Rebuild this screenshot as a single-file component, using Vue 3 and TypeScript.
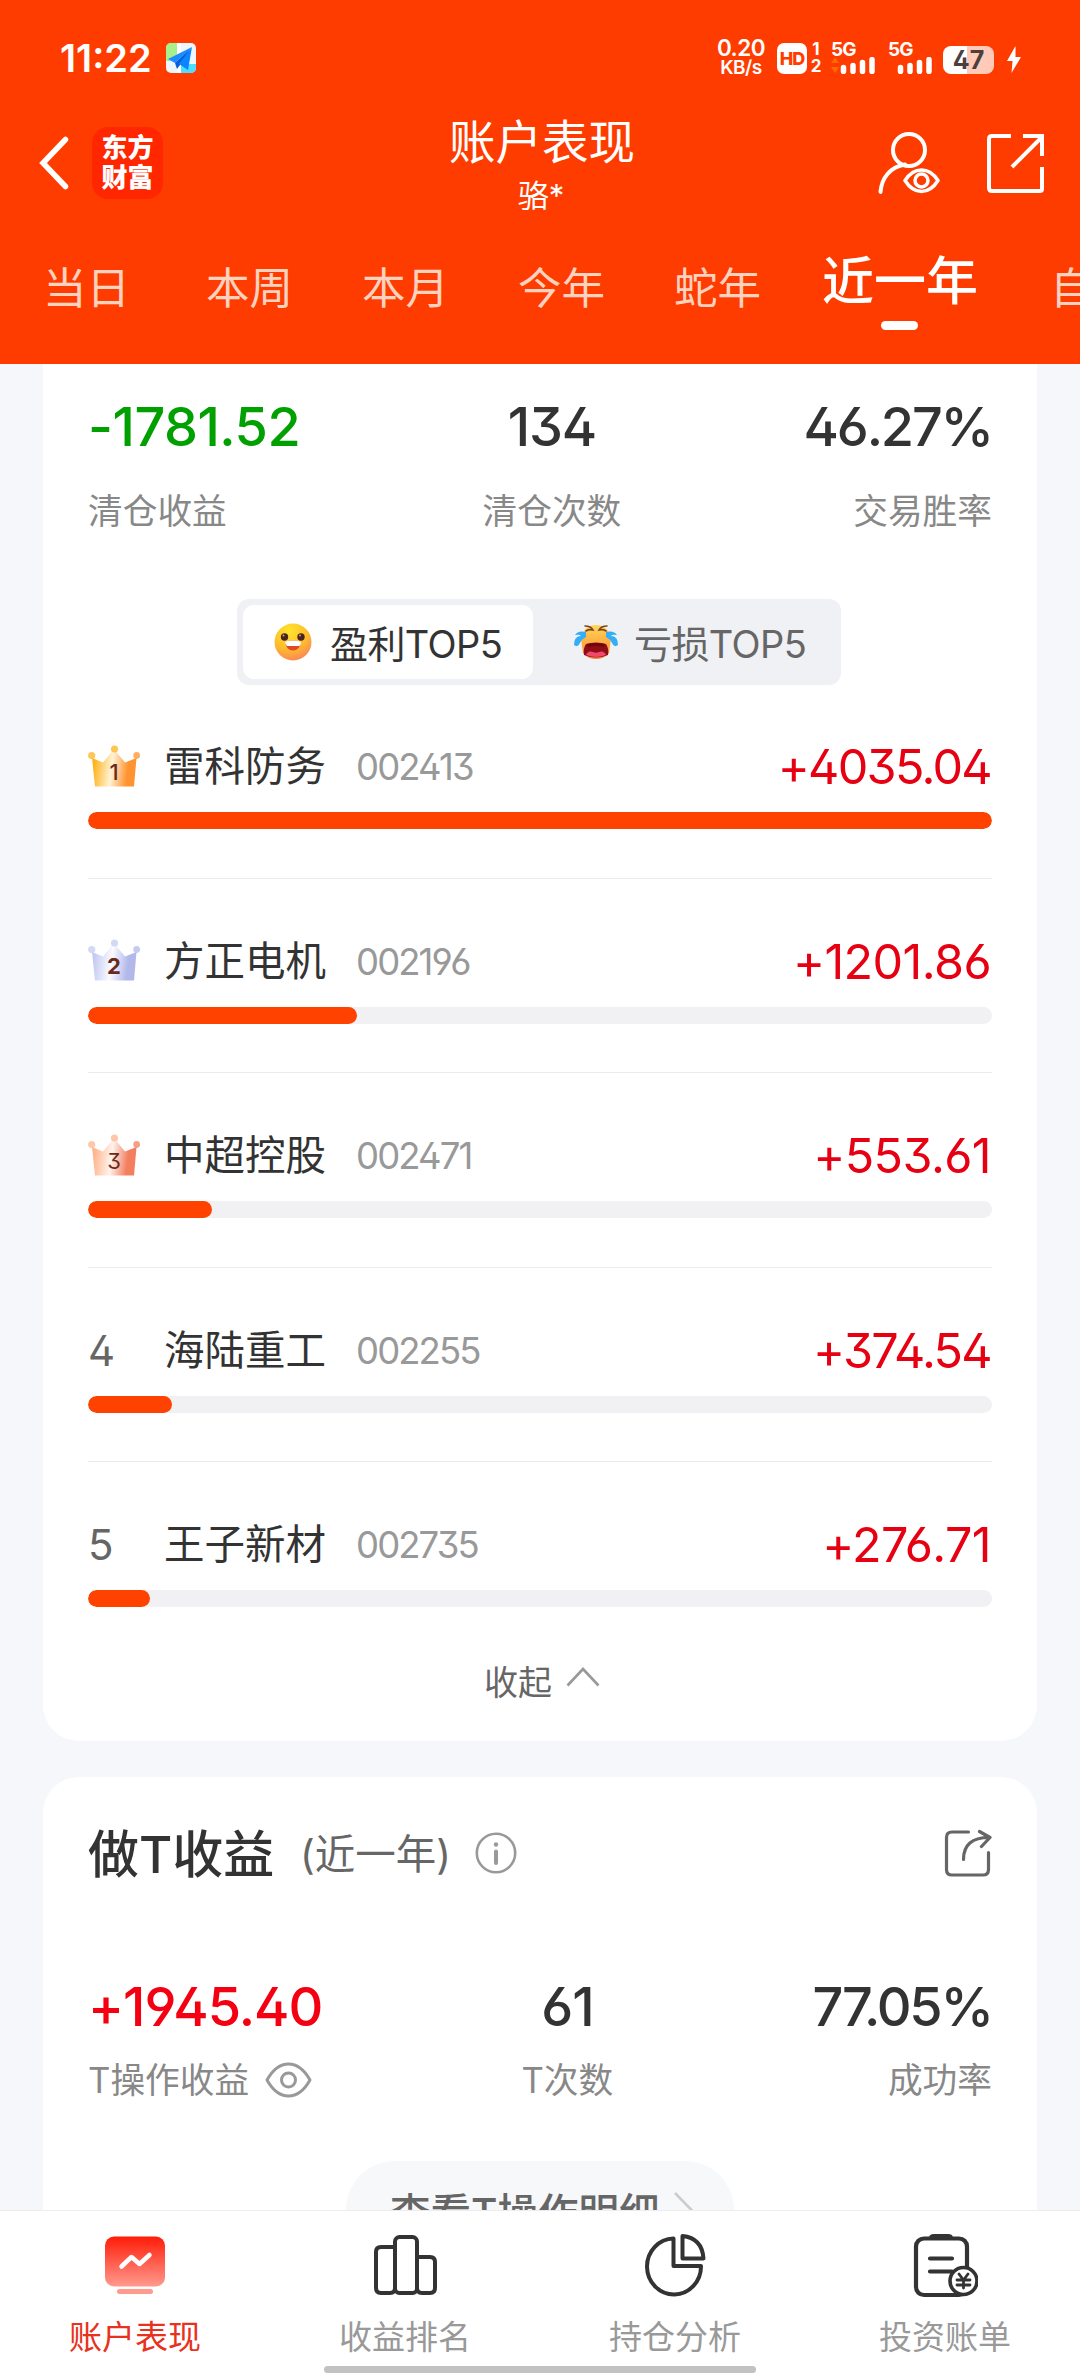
<script setup lang="ts">
interface Stock {
  rank: number
  name: string
  code: string
  profit: number
}

interface Crown {
  edge: string
  mid: string
  right: string
  weight: number
}

const periods: string[] = ['当日', '本周', '本月', '今年', '蛇年', '近一年', '自定义']
const activePeriod = '近一年'

const stocks: Stock[] = [
  { rank: 1, name: '雷科防务', code: '002413', profit: 4035.04 },
  { rank: 2, name: '方正电机', code: '002196', profit: 1201.86 },
  { rank: 3, name: '中超控股', code: '002471', profit: 553.61 },
  { rank: 4, name: '海陆重工', code: '002255', profit: 374.54 },
  { rank: 5, name: '王子新材', code: '002735', profit: 276.71 },
]

const crowns: Crown[] = [
  { edge: '#ffb21c', mid: '#fff3d6', right: '#ff9330', weight: 500 },
  { edge: '#c3cbf2', mid: '#fbfbff', right: '#b3b8ea', weight: 700 },
  { edge: '#ffb48c', mid: '#fff3ec', right: '#f37f5f', weight: 400 },
]

const best = Math.max(...stocks.map((s) => s.profit))
const share = (s: Stock): string => `${(s.profit / best) * 100}%`
// Amounts containing the narrow digit 1 need less tightening than the others.
const hasOne = (s: Stock): boolean => s.profit.toFixed(2).includes('1')
</script>

<template>
  <div class="page">
    <header class="top">
      <div class="status">
        <span class="clock">11:22</span>
        <svg class="plane" width="30" height="30" viewBox="0 0 30 30">
          <clipPath id="pl"><rect width="30" height="30" rx="5" /></clipPath>
          <g clip-path="url(#pl)">
            <rect width="30" height="30" fill="#eef6fb" />
            <rect width="11" height="18" fill="#a8f08c" />
            <rect x="15" y="21" width="15" height="9" fill="#4fdcff" />
            <rect x="11" width="4" height="30" fill="#fff" />
            <path d="M26 4 2 16l7 4z" fill="#1a8cff" />
            <path d="M26 4 9 20l2 6 3-4z" fill="#0560d8" />
            <path d="M26 4 13 21l9 6z" fill="#0a86ff" />
          </g>
        </svg>
        <div class="net"><span>0.20</span><span class="unit">KB/s</span></div>
        <div class="hd">HD</div>
        <div class="sims"><span>1</span><span>2</span></div>
        <div class="signal">
          <span>5G</span>
          <svg width="44" height="17" viewBox="0 0 44 17">
            <path d="M0 6 4 0.500 8 6zM0 10h8l-4 6z" fill="#ff6a00" />
            <path d="M12.500 10.500v4M22 8.500v6M31.500 5.500v9M41 2.500v12" stroke="#fff" stroke-width="5.500" stroke-linecap="round" />
          </svg>
        </div>
        <div class="signal second">
          <span>5G</span>
          <svg width="44" height="17" viewBox="0 0 44 17">
            <path d="M12.500 10.500v4M22 8.500v6M31.500 5.500v9M41 2.500v12" stroke="#fff" stroke-width="5.500" stroke-linecap="round" />
          </svg>
        </div>
        <div class="battery">47</div>
        <svg class="bolt" width="14" height="27" viewBox="0 0 14 27"><path d="M8.500 0 0 15h5.500L4.500 27 14 11H8.500z" fill="#fff" /></svg>
      </div>

      <div class="bar">
        <svg width="30" height="54" viewBox="0 0 30 54"><path d="M26.500 3.500 4 27l22.500 23.500" fill="none" stroke="#fff" stroke-width="5.500" stroke-linecap="round" /></svg>
        <div class="brand"><span>东方</span><span>财富</span></div>
        <div class="heading">
          <h1>账户表现</h1>
          <p>骆*</p>
        </div>
        <svg class="viewer" width="62" height="62" viewBox="0 0 62 62" fill="none" stroke="#fff" stroke-width="4" stroke-linecap="round">
          <circle cx="31" cy="18" r="16" />
          <path d="M2.500 60C3.500 46 12 35 27 32.500" />
          <path d="M27 48.500C36 34.500 51 34.500 60 48.500 51 63 36 63 27 48.500z" stroke-width="3.500" stroke-linejoin="round" />
          <circle cx="43.500" cy="48.500" r="6.500" stroke-width="3.500" />
        </svg>
        <svg width="58" height="60" viewBox="0 0 58 60" fill="none" stroke="#fff" stroke-width="4">
          <path d="M24 3H5Q2 3 2 6v49q0 3 3 3h48q2 0 2-2V34" />
          <path d="M36 3h19v20M55 4 25 34" />
        </svg>
      </div>

      <nav class="tabs">
        <span v-for="p in periods" :key="p" class="tab" :class="{ on: p === activePeriod }">{{ p }}</span>
      </nav>
    </header>

    <main class="content">
      <section class="card first">
        <div class="stats">
          <div class="stat"><b class="green">-1781.52</b><span>清仓收益</span></div>
          <div class="stat mid"><b>134</b><span>清仓次数</span></div>
          <div class="stat end"><b>46.27%</b><span>交易胜率</span></div>
        </div>

        <div class="switch">
          <div class="side on">
            <svg width="38" height="38" viewBox="0 0 38 38">
              <defs>
                <radialGradient id="face" cx=".4" cy=".2" r=".85">
                  <stop offset="0" stop-color="#ffe32e" /><stop offset=".55" stop-color="#ffc02a" /><stop offset="1" stop-color="#f9825a" />
                </radialGradient>
              </defs>
              <circle cx="19" cy="19" r="18.500" fill="url(#face)" />
              <circle cx="10.500" cy="14" r="3.700" fill="#4a2419" /><circle cx="27" cy="14" r="3.700" fill="#4a2419" />
              <circle cx="9.500" cy="12.500" r="1" fill="#c99" /><circle cx="26" cy="12.500" r="1" fill="#c99" />
              <path d="M11 18.500q8-2 16 0-1 9-8 9t-8-9z" fill="#e04a28" />
              <path d="M11 18.500q8-2 16 0 0 4-2 4.500H13q-2-1-2-4.500z" fill="#fff" />
            </svg>
            <span>盈利TOP5</span>
          </div>
          <div class="side">
            <svg width="44" height="36" viewBox="0 0 44 36">
              <defs>
                <linearGradient id="sob" x2="0" y2="1">
                  <stop offset="0" stop-color="#ffd75c" /><stop offset=".6" stop-color="#ffa63d" /><stop offset="1" stop-color="#ff8338" />
                </linearGradient>
              </defs>
              <path d="M22 1C31 1 36 7 37 15l-2 14q-5 6-13 6T9 29L7 15C8 7 13 1 22 1z" fill="url(#sob)" />
              <path d="M11 2q6 0 8 4-4-1-7 1M33 2q-6 0-8 4 4-1 7 1" fill="none" stroke="#7a4526" stroke-width="1.600" stroke-linecap="round" />
              <path d="M12 20q10-3 20 0 3 4 2 11-12 5-24 0-1-7 2-11z" fill="#8f0d14" />
              <path d="M13 20q9-2 18 0l-1 3q-8-2-16 0z" fill="#6d0610" />
              <path d="M12 31q2-5 7-3 3 1.500 6 0 5-2 7 3-10 4-20 0z" fill="#f0496b" />
              <path d="M12 8Q4 6 1 11q5-1 6 1-7 0-7 9 4 3 6-2 2-4 6-6z" fill="#35aef5" />
              <path d="M32 8q8-2 11 3-5-1-6 1 7 0 7 9-4 3-6-2-2-4-6-6z" fill="#35aef5" />
            </svg>
            <span>亏损TOP5</span>
          </div>
        </div>

        <div v-for="s in stocks" :key="s.code" class="row">
          <div class="line">
            <div class="rank">
              <svg v-if="s.rank <= 3" width="52" height="42" viewBox="0 0 52 42">
                <defs>
                  <linearGradient :id="'cr' + s.rank" x1="0" x2="1" y1="0" y2=".1">
                    <stop offset="0.080" :stop-color="crowns[s.rank - 1].edge" />
                    <stop offset="0.480" :stop-color="crowns[s.rank - 1].mid" />
                    <stop offset="0.850" :stop-color="crowns[s.rank - 1].right" />
                  </linearGradient>
                </defs>
                <path d="M4 13 15 17.500 24.500 6h3L37 17.500 48.500 13 46 41.500H7z" :fill="`url(#cr${s.rank})`" />
                <g :fill="crowns[s.rank - 1].edge" fill-opacity=".75">
                  <circle cx="3.700" cy="10.500" r="3.600" /><circle cx="26.500" cy="4" r="3.600" />
                </g>
                <circle cx="48.700" cy="10.500" r="3.400" :fill="crowns[s.rank - 1].right" fill-opacity=".75" />
                <text x="26" y="35" text-anchor="middle" font-size="22" fill="#6b2a1c" :font-weight="crowns[s.rank - 1].weight">{{ s.rank }}</text>
              </svg>
              <span v-else>{{ s.rank }}</span>
            </div>
            <span class="name">{{ s.name }}</span>
            <span class="code">{{ s.code }}</span>
            <span class="profit" :class="{ loose: hasOne(s) }">+{{ s.profit.toFixed(2) }}</span>
          </div>
          <div class="track"><div class="fill" :style="{ width: share(s) }"></div></div>
        </div>

        <div class="fold">
          <span>收起</span>
          <svg width="34" height="20" viewBox="0 0 34 20"><path d="M1.500 18.500 17 2l15.500 16.500" fill="none" stroke="#999" stroke-width="2.600" /></svg>
        </div>
      </section>

      <section class="card second">
        <div class="title">
          <h2>做T收益</h2>
          <span class="span">(近一年)</span>
          <svg width="42" height="42" viewBox="0 0 42 42">
            <circle cx="21" cy="21" r="19.200" fill="none" stroke="#999" stroke-width="2.600" />
            <circle cx="21" cy="12.500" r="2.200" fill="#999" />
            <path d="M21 19.500V31" stroke="#999" stroke-width="4" stroke-linecap="round" />
          </svg>
          <svg class="out" width="48" height="48" viewBox="0 0 48 48" fill="none" stroke="#666" stroke-width="3.200" stroke-linecap="round" stroke-linejoin="round">
            <path d="M24.500 3H8Q2.500 3 2.500 8.500v32Q2.500 46 8 46h31q5.500 0 5.500-5.500V23.500" />
            <path d="M19.500 30.500C19.500 16 28 8.500 45 8.500M35.500 2.500 46 8.500 37.500 17.500" />
          </svg>
        </div>
        <div class="stats">
          <div class="stat">
            <b class="red">+1945.40</b>
            <span class="with-eye">T操作收益
              <svg width="47" height="36" viewBox="0 0 47 36" fill="none" stroke="#999" stroke-width="3" stroke-linejoin="round">
                <path d="M2 18Q11 2 23.500 2T45 18Q36 34 23.500 34T2 18z" /><circle cx="23.500" cy="18" r="7" />
              </svg>
            </span>
          </div>
          <div class="stat mid"><b>61</b><span>T次数</span></div>
          <div class="stat end"><b>77.05%</b><span>成功率</span></div>
        </div>
        <div class="detail">
          <span>查看T操作明细</span>
          <svg width="21" height="40" viewBox="0 0 21 40"><path d="M2 3 18.500 20 2 37" fill="none" stroke="#ccc" stroke-width="2.600" /></svg>
        </div>
      </section>
    </main>

    <footer class="dock">
      <div class="item on">
        <svg width="66" height="66" viewBox="0 0 66 66">
          <defs><linearGradient id="scr" x2="0" y2="1"><stop offset="0" stop-color="#ff1c08" /><stop offset="1" stop-color="#ff9a8e" /></linearGradient></defs>
          <rect x="3" y="3.500" width="60" height="50" rx="9" fill="url(#scr)" />
          <path d="M19.500 33.500 29.500 24 37.500 31 47.500 22" fill="none" stroke="#fff" stroke-width="4.500" stroke-linecap="round" stroke-linejoin="round" />
          <rect x="15" y="56" width="36" height="5" rx="2.500" fill="#ff9a8e" />
        </svg>
        <span>账户表现</span>
      </div>
      <div class="item">
        <svg width="66" height="66" viewBox="0 0 66 66" fill="none" stroke="#333" stroke-width="4">
          <path d="M22 14H9Q4 14 4 19v36q0 5 5 5h9q5 0 5-5" />
          <rect x="23" y="4" width="22" height="56" rx="4.500" />
          <path d="M45 55q0 5 5 5h8q5 0 5-5V29q0-5-5-5H46" />
        </svg>
        <span>收益排名</span>
      </div>
      <div class="item">
        <svg width="66" height="66" viewBox="0 0 66 66" fill="none" stroke="#333" stroke-width="4" stroke-linejoin="round">
          <path d="M31.500 5.500A27 28 0 1 0 59 33H31.500z" />
          <path d="M40.500 3Q60 5 61.500 25.500H40.500z" />
        </svg>
        <span>持仓分析</span>
      </div>
      <div class="item">
        <svg width="66" height="66" viewBox="0 0 66 66" fill="none" stroke="#333" stroke-width="4.200" stroke-linecap="round">
          <rect x="4" y="5.500" width="51" height="56.500" rx="8" />
          <path d="M17 5Q17 1 22 1h14q5 0 5 4z" fill="#333" stroke="none" />
          <path d="M18 25.500h22M18 38.500h22" />
          <circle cx="51.500" cy="48" r="13.500" fill="#fff" stroke-width="3.600" />
          <path d="m47 41 4.500 6 4.500-6M51.500 47v8M45 47h13M45 52h13" stroke-width="2.800" />
        </svg>
        <span>投资账单</span>
      </div>
      <i class="home"></i>
    </footer>
  </div>
</template>

<style>
body {
  background: #f6f7fa;
}
</style>

<style scoped>
.page {
  width: 1080px;
  height: 2376px;
  overflow: hidden;
  display: flex;
  flex-direction: column;
  background: #f6f7fa;
  color: #333;
  font-family: Inter, "Noto Sans CJK SC", sans-serif;
  font-feature-settings: "ss01" 1;
}
svg { flex: none; display: block; }
h1, h2, p { margin: 0; font-weight: 400; }
span, b { white-space: nowrap; }

.top { height: 364px; flex: none; background: #ff3c00; color: #fff; overflow: hidden; }
.status { height: 76px; padding-top: 20px; display: flex; align-items: center; }
.clock { margin-left: 60px; width: 106px; font-size: 38px; font-weight: 600; line-height: 76px; letter-spacing: 0; }
.net { margin-left: 521px; width: 48px; display: flex; flex-direction: column; align-items: center; font-weight: 600; font-size: 22.500px; line-height: 20px; letter-spacing: -.5px; }
.net .unit { font-size: 19px; }
.hd { margin-left: 12px; width: 30px; height: 31px; border-radius: 7px; background: #fff; color: #ff3c00; font-size: 18px; font-weight: 800; line-height: 31px; text-align: center; letter-spacing: -1px; }
.sims { margin-left: 3px; width: 12px; display: flex; flex-direction: column; font-size: 17px; font-weight: 700; line-height: 17px; align-items: center; }
.signal { margin-left: 9px; width: 44px; height: 32px; font-size: 19px; font-weight: 700; line-height: 15px; letter-spacing: -1px; display: flex; flex-direction: column; }
.signal.second { margin-left: 13px; }
.battery { margin-left: 11px; width: 51px; height: 28px; margin-top: 3px; border-radius: 8px; background: linear-gradient(90deg, #fff 47%, #ffcab8 47%); color: #4b403e; font-size: 25px; font-weight: 700; line-height: 29px; text-align: center; }
.bolt { margin-left: 13px; margin-top: 3px; }

.bar { height: 132px; display: flex; align-items: center; padding-left: 39px; box-sizing: border-box; }
.bar > svg, .brand { margin-top: 1px; }
.brand { margin-left: 23px; width: 71px; height: 72px; padding-bottom: 3px; box-sizing: border-box; border-radius: 16px; background: #ff2600; display: flex; flex-direction: column; align-items: center; justify-content: center; font-family: "Noto Sans CJK SC", sans-serif; font-weight: 900; font-size: 26px; line-height: 30px; }
.heading { margin: 0 0 0 286px; width: 184px; text-align: center; }
.heading h1 { font-size: 46.500px; line-height: 60px; margin-top: 5px; white-space: nowrap; }
.heading p { font-size: 31px; line-height: 42px; margin-top: 3px; }
.viewer { margin-left: 245px; }
.viewer + svg { margin-left: 47px; }

.tabs { display: flex; align-items: center; margin-left: 43px; height: 120px; }
.tab { flex: none; font-size: 43.500px; line-height: 60px; color: #ffd2bf; margin-right: 69px; }
.tab:first-child { margin-right: 76px; }
.tab.on { position: relative; font-size: 52px; font-weight: 500; color: #fff; margin: -13px 72px 0 -8px; }
.tab.on::after { content: ""; position: absolute; left: 59px; top: 69px; width: 37px; height: 9px; border-radius: 5px; background: #fff; }

.content { flex: 1; min-height: 0; overflow: hidden; padding: 0 43px; }
.card { background: #fff; padding: 0 45px; overflow: hidden; border-radius: 36px; }
.card.first { border-radius: 0 0 36px 36px; padding-top: 33px; padding-bottom: 36px; }
.card.second { margin-top: 36px; padding-top: 48px; height: 600px; }
.stats { display: flex; justify-content: space-between; }
.second .stats { margin-top: 92px; }
.stat { display: flex; flex-direction: column; align-items: flex-start; }
.stat.mid { align-items: center; }
.stat.end { align-items: flex-end; }
.stat b { font-size: 54px; font-weight: 500; line-height: 60px; letter-spacing: -1.200px; }
.stat span { font-size: 34.700px; line-height: 48px; margin-top: 30px; color: #888; }
.stat.end b { letter-spacing: -2.200px; }
.second .stat span { margin-top: 19px; }
.stat b.green { color: #00a000; letter-spacing: -.5px; }
.stat b.red { color: #f50012; letter-spacing: -1px; }
.with-eye { display: flex; align-items: center; gap: 16px; }

.switch { width: 604px; height: 86px; margin: 64px 0 -1px 149px; padding: 6px; box-sizing: border-box; border-radius: 12px; background: #f0f1f4; display: flex; }
.side { height: 74px; width: 290px; border-radius: 11px; display: flex; align-items: center; padding-left: 31px; box-sizing: border-box; font-size: 38px; color: #666; }
.side span { margin-left: 18px; margin-top: -2px; letter-spacing: -.6px; }
.side.on { background: #fff; color: #333; }
.side.on + .side { padding-left: 41px; }
.side.on + .side span { margin-left: 16px; }

.row { height: 194.500px; box-sizing: border-box; padding-top: 53px; border-bottom: 1px solid #ebebed; }
.row:nth-last-child(2) { border-color: transparent; }
.line { height: 60px; line-height: 60px; display: flex; align-items: center; }
.rank { width: 76px; font-size: 42px; color: #666; }
.rank svg { margin-top: -3px; }
.name { font-size: 40.500px; width: 162px; }
.code { margin-left: 30px; font-size: 36.500px; color: #999; letter-spacing: -1.900px; }
.profit { margin-left: auto; margin-right: 1px; font-size: 48.500px; color: #e60012; letter-spacing: -1.700px; }
.profit.loose { letter-spacing: -.600px; }
.track { margin-top: 15px; height: 17px; border-radius: 9px; background: #f1f1f3; overflow: hidden; }
.fill { height: 17px; border-radius: 9px; background: #ff4200; }

.fold { height: 48px; display: flex; align-items: center; margin-left: 396px; font-size: 34px; color: #666; }
.fold svg { margin-left: 14px; margin-top: -7px; }

.title { height: 60px; display: flex; align-items: center; line-height: 60px; }
.title h2 { font-size: 51px; font-weight: 500; width: 212px; white-space: nowrap; }
.span { font-size: 40.500px; color: #666; width: 175px; }
.title svg { margin-top: -3px; }
.out { margin-left: auto; }
.detail { width: 388px; height: 98px; margin: 57.500px 0 0 258px; border-radius: 49px; background: #f7f8fa; display: flex; align-items: center; padding-left: 44px; box-sizing: border-box; font-size: 40.500px; font-weight: 500; color: #666; }
.detail svg { margin-left: 14px; }

.dock { position: relative; flex: none; height: 166px; box-sizing: border-box; border-top: 1px solid #ededed; background: #fff; display: flex; }
.item { width: 270px; display: flex; flex-direction: column; align-items: center; font-size: 33px; color: #999; padding-top: 22px; }
.item span { line-height: 40px; margin-top: 18px; }
.item.on { color: #e8321e; }
.home { position: absolute; left: 324px; top: 155px; width: 432px; height: 7px; border-radius: 4px; background: #c2c2c2; }
</style>
